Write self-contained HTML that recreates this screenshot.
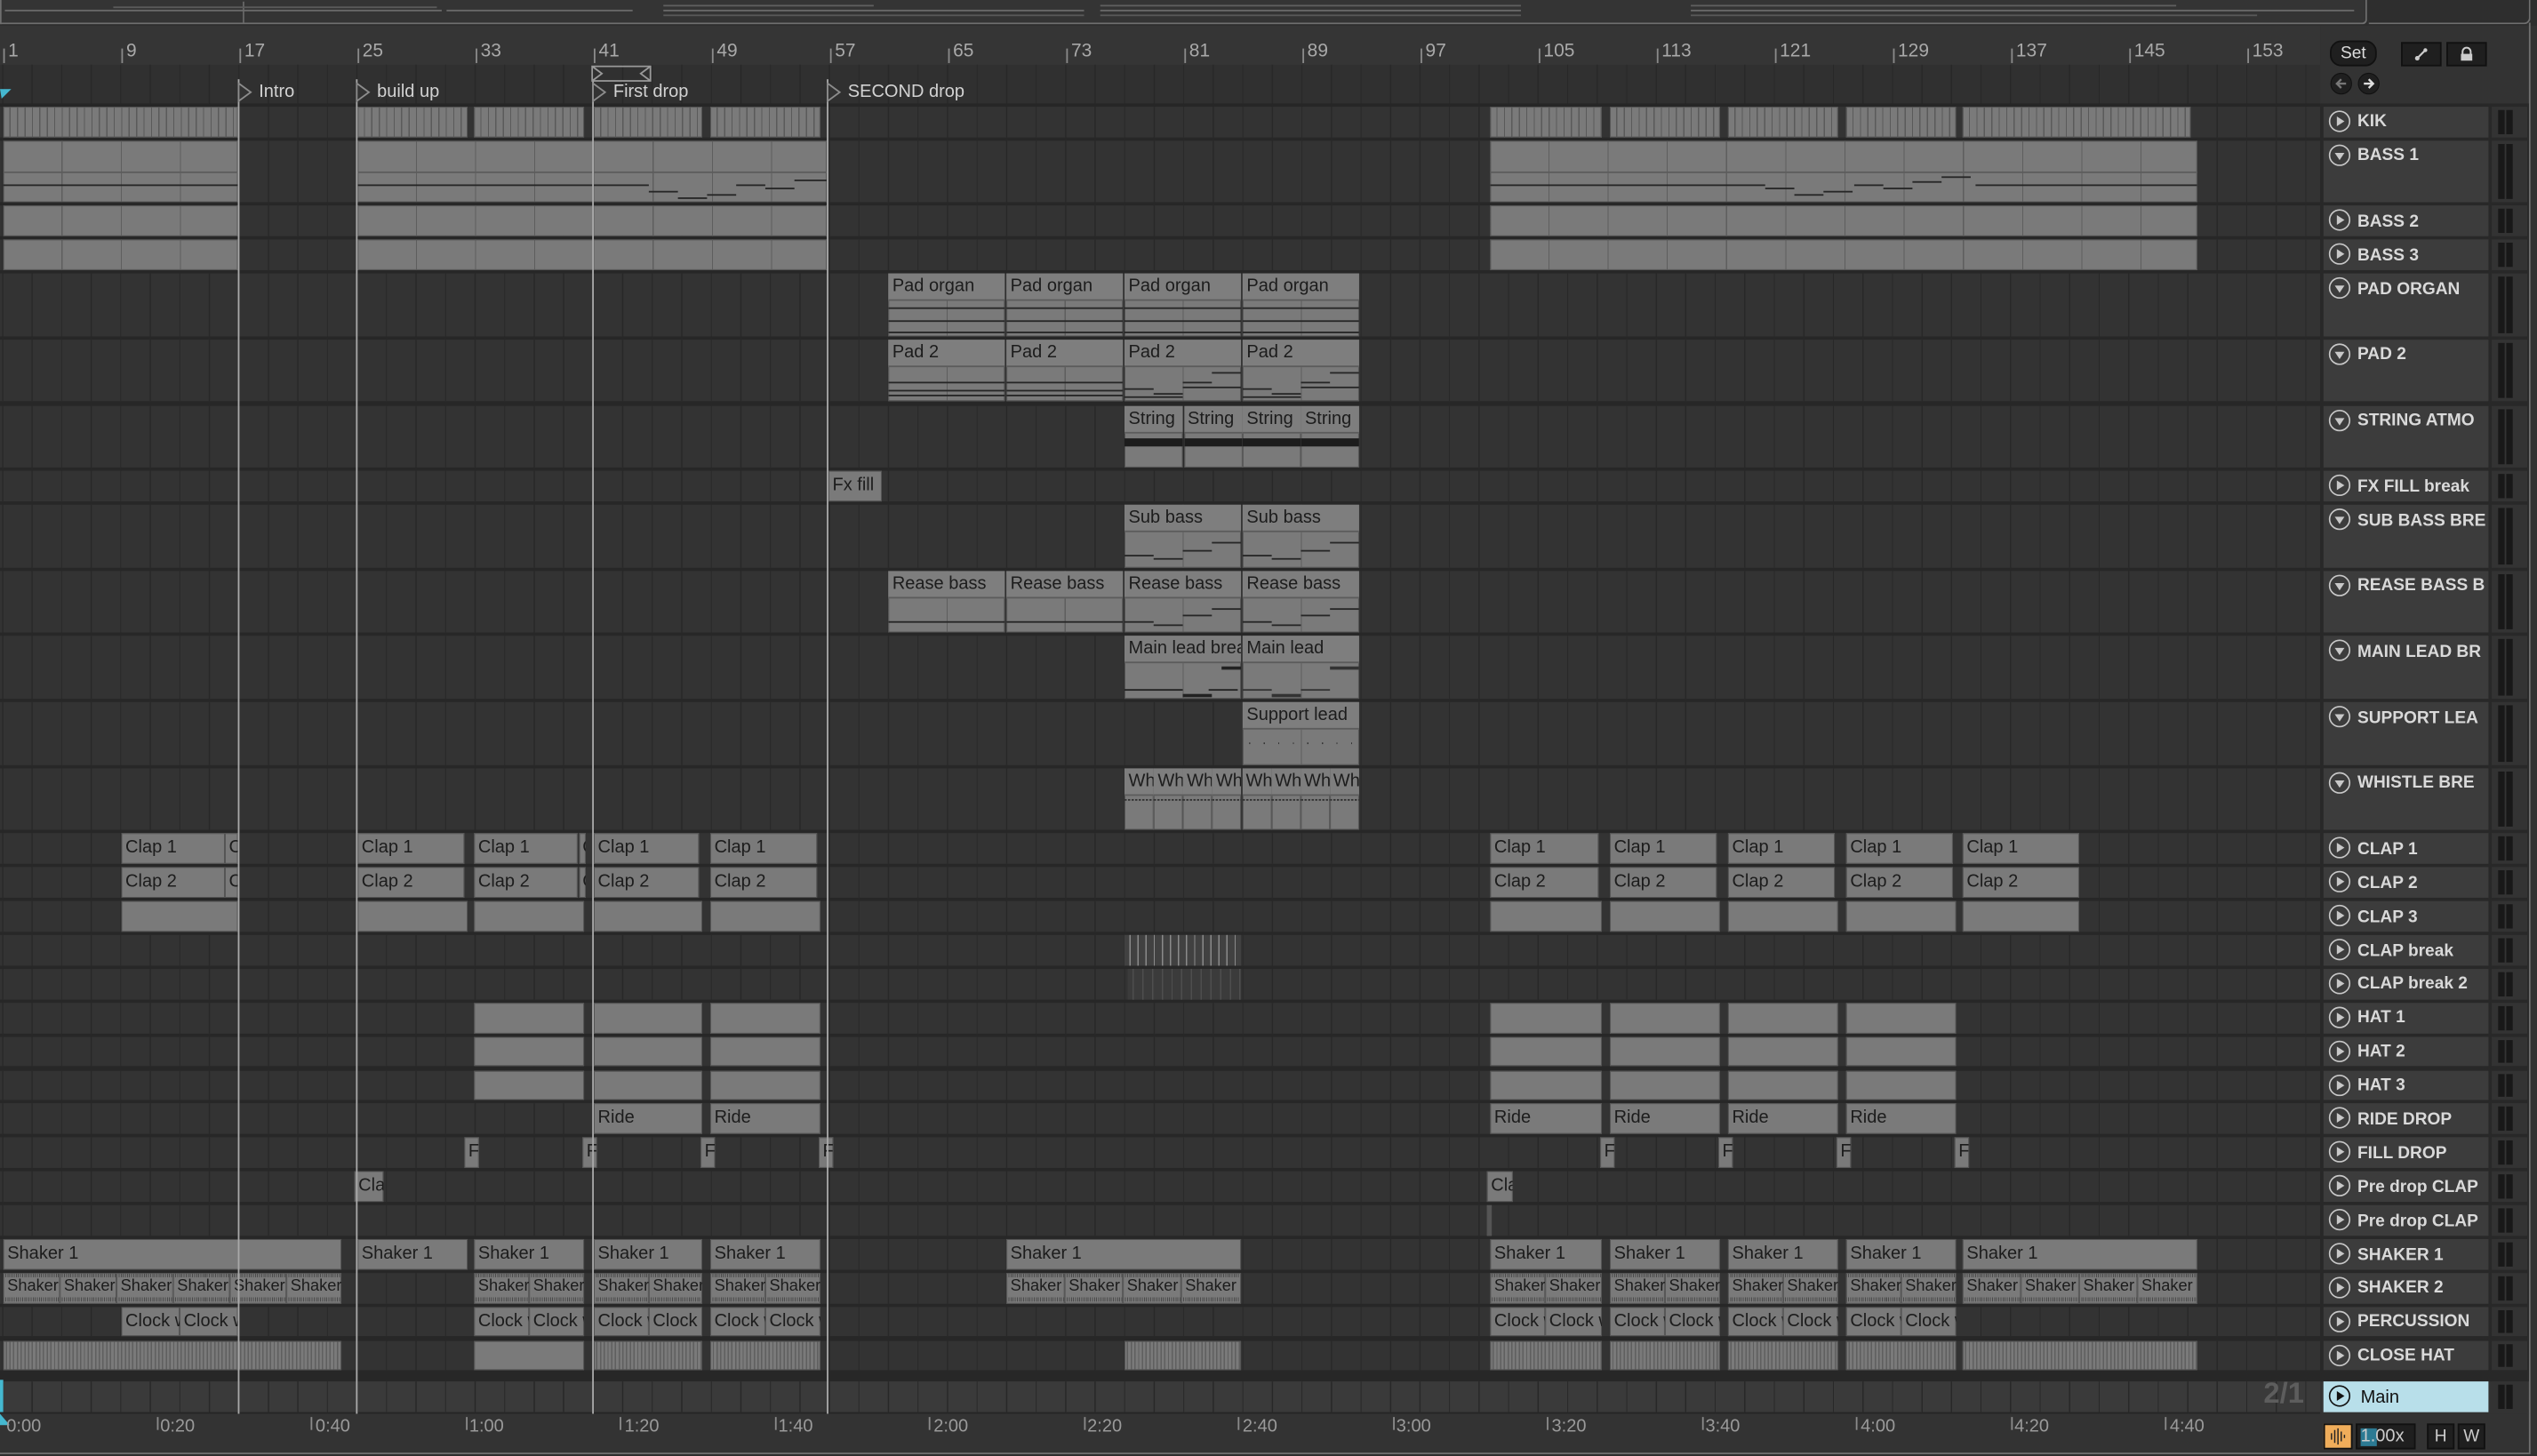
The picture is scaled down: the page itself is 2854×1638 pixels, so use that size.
<!DOCTYPE html>
<html><head><meta charset="utf-8">
<style>
html,body{margin:0;padding:0;width:2854px;height:1636px;overflow:hidden;background:#2e2e2e}
#s{position:absolute;left:0;top:0;width:1568px;height:899px;transform:scale(1.82015,1.8198);transform-origin:0 0;font-family:"Liberation Sans",sans-serif;background:#333}
.ab{position:absolute}
.grid{background-color:#333;background-image:repeating-linear-gradient(90deg,#282828 0 .7px,transparent .7px 18.25px);background-position:1.3px 0}
.r{position:absolute;left:0;width:1434px;height:18.7px}
.R{position:absolute;left:0;width:1434px;height:38.5px}
.c{position:absolute;top:0;height:100%;background:#7a7a7a;box-shadow:inset 0 0 0 .55px #555;overflow:hidden;font-size:11px;color:#1c1c1c;white-space:nowrap;padding-left:2.5px;box-sizing:border-box;line-height:18.7px}
.h{position:absolute;left:0;top:0;right:0;height:16px;line-height:16px;padding-left:2.5px;background:#7e7e7e;border-bottom:.6px solid #5c5c5c;font-size:11px}
.k{background-image:repeating-linear-gradient(90deg,transparent 0 3.9px,#5a5a5a 3.9px 4.6px)}
.ch{background-image:repeating-linear-gradient(90deg,transparent 0 1.5px,#5f5f5f 1.5px 2.3px)}
.d4{background-image:repeating-linear-gradient(90deg,transparent 0 36px,#5e5e5e 36px 36.6px)}
.cb{background:#414141;background-image:repeating-linear-gradient(90deg,transparent 0 3px,#8a8a8a 3px 3.8px,transparent 3.8px 5px);box-shadow:none}
.cb2{background:#3b3b3b;background-image:repeating-linear-gradient(90deg,transparent 0 3px,#4e4e4e 3px 3.8px,transparent 3.8px 6px);box-shadow:none}
.s2{font-size:10px;background-image:repeating-linear-gradient(90deg,#4a4a4a 0 .55px,transparent .55px 1.3px),repeating-linear-gradient(90deg,#4a4a4a 0 .55px,transparent .55px 1.3px);background-size:100% 2.6px,100% 2.6px;background-position:0 .6px,0 15.5px;background-repeat:repeat-x}
.ln{position:absolute;height:1px;background:#262626}
.loc{position:absolute;top:49px;width:.8px;height:825px;background:#a9a9a9;z-index:5}
.th{position:absolute;left:1436px;width:102.3px;background:#3c3c3c}
.th span{position:absolute;left:21px;top:3.5px;font-size:10.5px;font-weight:bold;color:#d9d9d9;white-space:nowrap}
.th svg{position:absolute;left:3px;top:2px}
.mt{position:absolute;left:1540px;width:22px;background:#333}
.mt i{position:absolute;top:2px;bottom:2px;width:3.6px;background:#181818}
.rn{position:absolute;top:26px;font-size:11.5px;color:#a9a9a9}
.tk{position:absolute;width:.7px;background:#8a8a8a}
.tm{position:absolute;top:876px;font-size:11px;color:#9a9a9a}
.mk{position:absolute;top:51px;font-size:11px;color:#d2d2d2}
</style></head><body>
<div id="s">
<!-- top overview -->
<div class="ab" style="left:0;top:0;width:1568px;height:15.5px;background:#2e2e2e"></div>
<div class="ab" style="left:0;top:0;width:1461px;height:14px;border:1px solid #6f6f6f;border-top:none;border-radius:0 0 3px 0;background:#343434"></div>
<div class="ab" style="left:150px;top:1px;width:1px;height:13px;background:#666"></div>
<div class="ab" style="left:3px;top:6px;width:270px;height:1px;background:#6a6a6a"></div>
<div class="ab" style="left:70px;top:3.5px;width:200px;height:1px;background:#5a5a5a"></div>
<div class="ab" style="left:276px;top:6px;width:115px;height:1px;background:#6a6a6a"></div>
<div class="ab" style="left:410px;top:3px;width:130px;height:1px;background:#5f5f5f"></div>
<div class="ab" style="left:410px;top:6px;width:260px;height:1px;background:#6a6a6a"></div>
<div class="ab" style="left:410px;top:9px;width:260px;height:1px;background:#585858"></div>
<div class="ab" style="left:680px;top:3px;width:260px;height:1px;background:#5f5f5f"></div>
<div class="ab" style="left:680px;top:6px;width:260px;height:1px;background:#6a6a6a"></div>
<div class="ab" style="left:680px;top:9px;width:260px;height:1px;background:#585858"></div>
<div class="ab" style="left:1045px;top:3px;width:300px;height:1px;background:#5f5f5f"></div>
<div class="ab" style="left:1045px;top:6px;width:410px;height:1px;background:#6a6a6a"></div>
<div class="ab" style="left:1045px;top:9px;width:350px;height:1px;background:#585858"></div>
<div class="ab" style="left:1464px;top:0;width:99px;height:14px;border:1px solid #6f6f6f;border-top:none;border-left:none;border-radius:0 0 4px 0"></div>
<div class="ab" style="left:1562.5px;top:14px;width:1.3px;height:885px;background:#6f6f6f"></div>

<!-- ruler -->
<div class="ab" style="left:0;top:15.5px;width:1434px;height:24px;background:#353535"></div>
<div class="tk" style="left:1.6px;top:30px;height:9px"></div><div class="rn" style="left:5px">1</div>
<div class="tk" style="left:74.6px;top:30px;height:9px"></div><div class="rn" style="left:78px">9</div>
<div class="tk" style="left:147.6px;top:30px;height:9px"></div><div class="rn" style="left:151px">17</div>
<div class="tk" style="left:220.6px;top:30px;height:9px"></div><div class="rn" style="left:224px">25</div>
<div class="tk" style="left:293.6px;top:30px;height:9px"></div><div class="rn" style="left:297px">33</div>
<div class="tk" style="left:366.6px;top:30px;height:9px"></div><div class="rn" style="left:370px">41</div>
<div class="tk" style="left:439.6px;top:30px;height:9px"></div><div class="rn" style="left:443px">49</div>
<div class="tk" style="left:512.6px;top:30px;height:9px"></div><div class="rn" style="left:516px">57</div>
<div class="tk" style="left:585.6px;top:30px;height:9px"></div><div class="rn" style="left:589px">65</div>
<div class="tk" style="left:658.6px;top:30px;height:9px"></div><div class="rn" style="left:662px">73</div>
<div class="tk" style="left:731.6px;top:30px;height:9px"></div><div class="rn" style="left:735px">81</div>
<div class="tk" style="left:804.6px;top:30px;height:9px"></div><div class="rn" style="left:808px">89</div>
<div class="tk" style="left:877.6px;top:30px;height:9px"></div><div class="rn" style="left:881px">97</div>
<div class="tk" style="left:950.6px;top:30px;height:9px"></div><div class="rn" style="left:954px">105</div>
<div class="tk" style="left:1023.6px;top:30px;height:9px"></div><div class="rn" style="left:1027px">113</div>
<div class="tk" style="left:1096.6px;top:30px;height:9px"></div><div class="rn" style="left:1100px">121</div>
<div class="tk" style="left:1169.6px;top:30px;height:9px"></div><div class="rn" style="left:1173px">129</div>
<div class="tk" style="left:1242.6px;top:30px;height:9px"></div><div class="rn" style="left:1246px">137</div>
<div class="tk" style="left:1315.6px;top:30px;height:9px"></div><div class="rn" style="left:1319px">145</div>
<div class="tk" style="left:1388.6px;top:30px;height:9px"></div><div class="rn" style="left:1392px">153</div>

<!-- marker row -->
<div class="ab grid" style="left:0;top:39.5px;width:1434px;height:25px;background-color:#303030"></div>
<div class="ab" style="left:0;top:63.5px;width:1434px;height:2.4px;background:#262626"></div>
<svg class="ab" style="left:0;top:55px" width="8" height="8"><path d="M0 0H7L1 6Z" fill="#45b8d0"/></svg>
<svg class="ab" style="left:365px;top:40px;z-index:6" width="40" height="12"><path d="M1 1H37V10H1ZM1 1L7 5.5L1 10M37 1L31 5.5L37 10" fill="none" stroke="#9a9a9a" stroke-width="1"/></svg>
<svg class="ab" style="left:147px;top:51px;z-index:6" width="10" height="13"><path d="M.5 .5L8 6L.5 11.5Z" fill="#333" stroke="#8c8c8c"/></svg><div class="mk" style="left:160px">Intro</div>
<svg class="ab" style="left:220px;top:51px;z-index:6" width="10" height="13"><path d="M.5 .5L8 6L.5 11.5Z" fill="#333" stroke="#8c8c8c"/></svg><div class="mk" style="left:233px">build up</div>
<svg class="ab" style="left:366px;top:51px;z-index:6" width="10" height="13"><path d="M.5 .5L8 6L.5 11.5Z" fill="#333" stroke="#8c8c8c"/></svg><div class="mk" style="left:379px">First drop</div>
<svg class="ab" style="left:511px;top:51px;z-index:6" width="10" height="13"><path d="M.5 .5L8 6L.5 11.5Z" fill="#333" stroke="#8c8c8c"/></svg><div class="mk" style="left:524px">SECOND drop</div>

<!-- lanes bg -->
<div class="ab" style="left:0;top:65.5px;width:1434px;height:788px;background:#272727"></div>

<!-- KIK -->
<div class="r grid" style="top:65.94px">
<div class="c k" style="left:2px;width:145px"></div><div class="c k" style="left:221px;width:68px"></div><div class="c k" style="left:293px;width:68px"></div><div class="c k" style="left:367px;width:67px"></div><div class="c k" style="left:439px;width:68px"></div><div class="c k" style="left:921px;width:69px"></div><div class="c k" style="left:995px;width:68px"></div><div class="c k" style="left:1068px;width:68px"></div><div class="c k" style="left:1141px;width:68px"></div><div class="c k" style="left:1213px;width:141px"></div>
</div>
<!-- BASS1 -->
<div class="R grid" style="top:86.82px">
<div class="c d4" style="left:2px;width:145px"><div class="ln" style="left:0;right:0;top:18.7px;height:.7px;background:#5c5c5c"></div><div class="ln" style="left:0;right:0;top:27px;height:.9px"></div></div>
<div class="c d4" style="left:221px;width:290px"><div class="ln" style="left:0;right:0;top:18.7px;height:.7px;background:#5c5c5c"></div><div class="ln" style="left:0;width:180px;top:27px;height:.9px"></div><div class="ln" style="left:180px;width:18px;top:31px;height:.9px"></div><div class="ln" style="left:198px;width:18px;top:35px;height:.9px"></div><div class="ln" style="left:216px;width:18px;top:33px;height:.9px"></div><div class="ln" style="left:234px;width:18px;top:27px;height:.9px"></div><div class="ln" style="left:252px;width:18px;top:29px;height:.9px"></div><div class="ln" style="left:270px;width:20px;top:24px;height:.9px"></div></div>
<div class="c d4" style="left:921px;width:437px"><div class="ln" style="left:0;right:0;top:18.7px;height:.7px;background:#5c5c5c"></div><div class="ln" style="left:0;width:170px;top:27px;height:.9px"></div><div class="ln" style="left:170px;width:18px;top:29px;height:.9px"></div><div class="ln" style="left:188px;width:18px;top:33px;height:.9px"></div><div class="ln" style="left:206px;width:18px;top:31px;height:.9px"></div><div class="ln" style="left:225px;width:18px;top:27px;height:.9px"></div><div class="ln" style="left:243px;width:18px;top:29px;height:.9px"></div><div class="ln" style="left:261px;width:18px;top:25px;height:.9px"></div><div class="ln" style="left:279px;width:18px;top:22px;height:.9px"></div><div class="ln" style="left:300px;width:137px;top:27px;height:.9px"></div></div>
</div>
<!-- BASS2/3 -->
<div class="r grid" style="top:127.49px"><div class="c d4" style="left:2px;width:145px"></div><div class="c d4" style="left:221px;width:290px"></div><div class="c d4" style="left:921px;width:437px"></div></div>
<div class="r grid" style="top:148.37px"><div class="c d4" style="left:2px;width:145px"></div><div class="c d4" style="left:221px;width:290px"></div><div class="c d4" style="left:921px;width:437px"></div></div>
<!-- PAD ORGAN -->
<div class="R grid" style="top:169.25px">
<div class="c d4" style="left:549px;width:72px"><div class="h">Pad organ</div><div class="ln" style="left:0;right:0;top:20.5px;height:1.2px"></div><div class="ln" style="left:0;right:0;top:28.5px;height:1.4px"></div><div class="ln" style="left:0;right:0;top:35.5px;height:1.2px"></div></div>
<div class="c d4" style="left:622px;width:72px"><div class="h">Pad organ</div><div class="ln" style="left:0;right:0;top:20.5px;height:1.2px"></div><div class="ln" style="left:0;right:0;top:28.5px;height:1.4px"></div><div class="ln" style="left:0;right:0;top:35.5px;height:1.2px"></div></div>
<div class="c d4" style="left:695px;width:72px"><div class="h">Pad organ</div><div class="ln" style="left:0;right:0;top:20.5px;height:1.2px"></div><div class="ln" style="left:0;right:0;top:28.5px;height:1.4px"></div><div class="ln" style="left:0;right:0;top:35.5px;height:1.2px"></div></div>
<div class="c d4" style="left:768px;width:72px"><div class="h">Pad organ</div><div class="ln" style="left:0;right:0;top:20.5px;height:1.2px"></div><div class="ln" style="left:0;right:0;top:28.5px;height:1.4px"></div><div class="ln" style="left:0;right:0;top:35.5px;height:1.2px"></div></div>
</div>
<!-- PAD 2 -->
<div class="R grid" style="top:209.91px">
<div class="c d4" style="left:549px;width:72px"><div class="h">Pad 2</div><div class="ln" style="left:0;right:0;top:26.5px;height:.8px"></div><div class="ln" style="left:0;right:0;top:31px;height:.8px"></div><div class="ln" style="left:0;right:0;top:34.5px;height:.8px"></div></div>
<div class="c d4" style="left:622px;width:72px"><div class="h">Pad 2</div><div class="ln" style="left:0;right:0;top:26.5px;height:.8px"></div><div class="ln" style="left:0;right:0;top:31px;height:.8px"></div><div class="ln" style="left:0;right:0;top:34.5px;height:.8px"></div></div>
<div class="c d4" style="left:695px;width:72px"><div class="h">Pad 2</div><div class="ln" style="left:0;width:18px;top:30px;height:.8px"></div><div class="ln" style="left:18px;width:18px;top:33px;height:.8px"></div><div class="ln" style="left:36px;width:18px;top:26px;height:.8px"></div><div class="ln" style="left:54px;width:18px;top:20px;height:.8px"></div><div class="ln" style="left:0;width:36px;top:35px;height:.8px"></div><div class="ln" style="left:36px;width:36px;top:29px;height:.8px"></div></div>
<div class="c d4" style="left:768px;width:72px"><div class="h">Pad 2</div><div class="ln" style="left:0;width:18px;top:30px;height:.8px"></div><div class="ln" style="left:18px;width:18px;top:33px;height:.8px"></div><div class="ln" style="left:36px;width:18px;top:26px;height:.8px"></div><div class="ln" style="left:54px;width:18px;top:20px;height:.8px"></div><div class="ln" style="left:0;width:36px;top:35px;height:.8px"></div><div class="ln" style="left:36px;width:36px;top:29px;height:.8px"></div></div>
</div>
<!-- STRING -->
<div class="R grid" style="top:250.58px">
<div class="c" style="left:695px;width:36px"><div class="h">String</div><div class="ln" style="left:0;right:0;top:20px;height:5px;background:#1c1c1c"></div></div>
<div class="c" style="left:731.5px;width:36px"><div class="h">String</div><div class="ln" style="left:0;right:0;top:20px;height:5px;background:#1c1c1c"></div></div>
<div class="c" style="left:768px;width:36px"><div class="h">String</div><div class="ln" style="left:0;right:0;top:20px;height:5px;background:#1c1c1c"></div></div>
<div class="c" style="left:804px;width:36px"><div class="h">String</div><div class="ln" style="left:0;right:0;top:20px;height:5px;background:#1c1c1c"></div></div>
</div>
<!-- FX -->
<div class="r grid" style="top:291.24px"><div class="c" style="left:512px;width:33px">Fx fill</div></div>
<!-- SUB -->
<div class="R grid" style="top:312.12px">
<div class="c d4" style="left:695px;width:72px"><div class="h">Sub bass</div><div class="ln" style="left:0;width:18px;top:30.8px;height:.8px"></div><div class="ln" style="left:18px;width:18px;top:33.3px;height:.8px"></div><div class="ln" style="left:36px;width:18px;top:27.5px;height:.8px"></div><div class="ln" style="left:54px;width:18px;top:23px;height:.8px"></div></div>
<div class="c d4" style="left:768px;width:72px"><div class="h">Sub bass</div><div class="ln" style="left:0;width:18px;top:30.8px;height:.8px"></div><div class="ln" style="left:18px;width:18px;top:33.3px;height:.8px"></div><div class="ln" style="left:36px;width:18px;top:27.5px;height:.8px"></div><div class="ln" style="left:54px;width:18px;top:23px;height:.8px"></div></div>
</div>
<!-- REASE -->
<div class="R grid" style="top:352.79px">
<div class="c d4" style="left:549px;width:72px"><div class="h">Rease bass</div><div class="ln" style="left:0;right:0;top:30.8px;height:.8px"></div></div>
<div class="c d4" style="left:622px;width:72px"><div class="h">Rease bass</div><div class="ln" style="left:0;right:0;top:30.8px;height:.8px"></div></div>
<div class="c d4" style="left:695px;width:72px"><div class="h">Rease bass</div><div class="ln" style="left:0;width:18px;top:30.8px;height:.8px"></div><div class="ln" style="left:18px;width:18px;top:33.3px;height:.8px"></div><div class="ln" style="left:36px;width:18px;top:27.5px;height:.8px"></div><div class="ln" style="left:54px;width:18px;top:23px;height:.8px"></div></div>
<div class="c d4" style="left:768px;width:72px"><div class="h">Rease bass</div><div class="ln" style="left:0;width:18px;top:30.8px;height:.8px"></div><div class="ln" style="left:18px;width:18px;top:33.3px;height:.8px"></div><div class="ln" style="left:36px;width:18px;top:27.5px;height:.8px"></div><div class="ln" style="left:54px;width:18px;top:23px;height:.8px"></div></div>
</div>
<!-- MAIN LEAD -->
<div class="R grid" style="top:393.45px">
<div class="c d4" style="left:695px;width:72px"><div class="h">Main lead break</div><div class="ln" style="left:0;width:36px;top:32.2px;height:1.6px;background:#222"></div><div class="ln" style="left:36px;width:18px;top:35.5px;height:1.6px;background:#222"></div><div class="ln" style="left:52px;width:18px;top:32.2px;height:1.6px;background:#222"></div><div class="ln" style="left:60px;width:12px;top:19px;height:1.6px;background:#222"></div></div>
<div class="c d4" style="left:768px;width:72px"><div class="h">Main lead</div><div class="ln" style="left:0;width:18px;top:32.2px;height:1.6px;background:#333"></div><div class="ln" style="left:18px;width:18px;top:35.5px;height:1.6px;background:#333"></div><div class="ln" style="left:36px;width:18px;top:32.2px;height:1.6px;background:#333"></div><div class="ln" style="left:54px;width:18px;top:19px;height:1.6px;background:#333"></div></div>
</div>
<!-- SUPPORT -->
<div class="R grid" style="top:434.11px"><div class="c d4" style="left:768px;width:72px"><div class="h">Support lead</div><div class="ln" style="left:4px;width:66px;top:25px;height:.7px;background:repeating-linear-gradient(90deg,#333 0 .7px,transparent .7px 9px)"></div></div></div>
<!-- WHISTLE -->
<div class="R grid" style="top:474.78px">
<div class="c" style="left:695px;width:18px"><div class="h">Wh</div><div class="ln" style="left:0;right:0;top:19.5px;height:.7px;background:repeating-linear-gradient(90deg,#333 0 1.4px,transparent 1.4px 2.2px)"></div></div>
<div class="c" style="left:713px;width:18px"><div class="h">Wh</div><div class="ln" style="left:0;right:0;top:19.5px;height:.7px;background:repeating-linear-gradient(90deg,#333 0 1.4px,transparent 1.4px 2.2px)"></div></div>
<div class="c" style="left:731px;width:18px"><div class="h">Wh</div><div class="ln" style="left:0;right:0;top:19.5px;height:.7px;background:repeating-linear-gradient(90deg,#333 0 1.4px,transparent 1.4px 2.2px)"></div></div>
<div class="c" style="left:749px;width:18px"><div class="h">Wh</div><div class="ln" style="left:0;right:0;top:19.5px;height:.7px;background:repeating-linear-gradient(90deg,#333 0 1.4px,transparent 1.4px 2.2px)"></div></div>
<div class="c" style="left:767.5px;width:18px"><div class="h">Wh</div><div class="ln" style="left:0;right:0;top:19.5px;height:.7px;background:repeating-linear-gradient(90deg,#333 0 1.4px,transparent 1.4px 2.2px)"></div></div>
<div class="c" style="left:785.5px;width:18px"><div class="h">Wh</div><div class="ln" style="left:0;right:0;top:19.5px;height:.7px;background:repeating-linear-gradient(90deg,#333 0 1.4px,transparent 1.4px 2.2px)"></div></div>
<div class="c" style="left:803.5px;width:18px"><div class="h">Wh</div><div class="ln" style="left:0;right:0;top:19.5px;height:.7px;background:repeating-linear-gradient(90deg,#333 0 1.4px,transparent 1.4px 2.2px)"></div></div>
<div class="c" style="left:821.5px;width:18.5px"><div class="h">Wh</div><div class="ln" style="left:0;right:0;top:19.5px;height:.7px;background:repeating-linear-gradient(90deg,#333 0 1.4px,transparent 1.4px 2.2px)"></div></div>
</div>
<!-- CLAP1 -->
<div class="r grid" style="top:515.44px">
<div class="c" style="left:75px;width:64px">Clap 1</div><div class="c" style="left:139px;width:8px">C</div><div class="c" style="left:221px;width:66px">Clap 1</div><div class="c" style="left:293px;width:64px">Clap 1</div><div class="c" style="left:357.5px;width:4px">C</div><div class="c" style="left:367px;width:65px">Clap 1</div><div class="c" style="left:439px;width:66px">Clap 1</div><div class="c" style="left:921px;width:67px">Clap 1</div><div class="c" style="left:995px;width:66px">Clap 1</div><div class="c" style="left:1068px;width:66px">Clap 1</div><div class="c" style="left:1141px;width:66px">Clap 1</div><div class="c" style="left:1213px;width:72px">Clap 1</div>
</div>
<div class="r grid" style="top:536.32px">
<div class="c" style="left:75px;width:64px">Clap 2</div><div class="c" style="left:139px;width:8px">C</div><div class="c" style="left:221px;width:66px">Clap 2</div><div class="c" style="left:293px;width:64px">Clap 2</div><div class="c" style="left:357.5px;width:4px">C</div><div class="c" style="left:367px;width:65px">Clap 2</div><div class="c" style="left:439px;width:66px">Clap 2</div><div class="c" style="left:921px;width:67px">Clap 2</div><div class="c" style="left:995px;width:66px">Clap 2</div><div class="c" style="left:1068px;width:66px">Clap 2</div><div class="c" style="left:1141px;width:66px">Clap 2</div><div class="c" style="left:1213px;width:72px">Clap 2</div>
</div>
<div class="r grid" style="top:557.2px">
<div class="c" style="left:75px;width:72px"></div><div class="c" style="left:221px;width:68px"></div><div class="c" style="left:293px;width:68px"></div><div class="c" style="left:367px;width:67px"></div><div class="c" style="left:439px;width:68px"></div><div class="c" style="left:921px;width:69px"></div><div class="c" style="left:995px;width:68px"></div><div class="c" style="left:1068px;width:68px"></div><div class="c" style="left:1141px;width:68px"></div><div class="c" style="left:1213px;width:72px"></div>
</div>
<!-- CLAP break -->
<div class="r grid" style="top:578.09px"><div class="c cb" style="left:695px;width:72px"></div></div>
<div class="r grid" style="top:598.97px"><div class="c cb2" style="left:697px;width:70px"></div></div>
<!-- HATS -->
<div class="r grid" style="top:619.85px"><div class="c" style="left:293px;width:68px"></div><div class="c" style="left:367px;width:67px"></div><div class="c" style="left:439px;width:68px"></div><div class="c" style="left:921px;width:69px"></div><div class="c" style="left:995px;width:68px"></div><div class="c" style="left:1068px;width:68px"></div><div class="c" style="left:1141px;width:68px"></div></div>
<div class="r grid" style="top:640.73px"><div class="c" style="left:293px;width:68px"></div><div class="c" style="left:367px;width:67px"></div><div class="c" style="left:439px;width:68px"></div><div class="c" style="left:921px;width:69px"></div><div class="c" style="left:995px;width:68px"></div><div class="c" style="left:1068px;width:68px"></div><div class="c" style="left:1141px;width:68px"></div></div>
<div class="r grid" style="top:661.61px"><div class="c" style="left:293px;width:68px"></div><div class="c" style="left:367px;width:67px"></div><div class="c" style="left:439px;width:68px"></div><div class="c" style="left:921px;width:69px"></div><div class="c" style="left:995px;width:68px"></div><div class="c" style="left:1068px;width:68px"></div><div class="c" style="left:1141px;width:68px"></div></div>
<!-- RIDE -->
<div class="r grid" style="top:682.49px"><div class="c" style="left:367px;width:67px">Ride</div><div class="c" style="left:439px;width:68px">Ride</div><div class="c" style="left:921px;width:69px">Ride</div><div class="c" style="left:995px;width:68px">Ride</div><div class="c" style="left:1068px;width:68px">Ride</div><div class="c" style="left:1141px;width:68px">Ride</div></div>
<!-- FILL -->
<div class="r grid" style="top:703.37px"><div class="c" style="left:287px;width:9px">F</div><div class="c" style="left:360px;width:9px">F</div><div class="c" style="left:433px;width:9px">F</div><div class="c" style="left:506px;width:9px">F</div><div class="c" style="left:989px;width:9px">F</div><div class="c" style="left:1062px;width:9px">F</div><div class="c" style="left:1135px;width:9px">F</div><div class="c" style="left:1208px;width:9px">F</div></div>
<!-- Pre drop -->
<div class="r grid" style="top:724.25px"><div class="c" style="left:219px;width:18px">Cla</div><div class="c" style="left:919px;width:16px">Cla</div></div>
<div class="r grid" style="top:745.14px"><div class="c" style="left:919px;width:2px;background:#555"></div></div>
<!-- SHAKER1 -->
<div class="r grid" style="top:766.02px"><div class="c" style="left:2px;width:209px">Shaker 1</div><div class="c" style="left:221px;width:68px">Shaker 1</div><div class="c" style="left:293px;width:68px">Shaker 1</div><div class="c" style="left:367px;width:67px">Shaker 1</div><div class="c" style="left:439px;width:68px">Shaker 1</div><div class="c" style="left:622px;width:145px">Shaker 1</div><div class="c" style="left:921px;width:69px">Shaker 1</div><div class="c" style="left:995px;width:68px">Shaker 1</div><div class="c" style="left:1068px;width:68px">Shaker 1</div><div class="c" style="left:1141px;width:68px">Shaker 1</div><div class="c" style="left:1213px;width:145px">Shaker 1</div></div>
<!-- SHAKER2 -->
<div class="r grid" style="top:786.9px">
<div class="c s2" style="left:2px;width:35px">Shaker</div><div class="c s2" style="left:37px;width:35px">Shaker</div><div class="c s2" style="left:72px;width:35px">Shaker</div><div class="c s2" style="left:107px;width:35px">Shaker</div><div class="c s2" style="left:142px;width:35px">Shaker</div><div class="c s2" style="left:177px;width:34px">Shaker</div>
<div class="c s2" style="left:293px;width:34px">Shaker</div><div class="c s2" style="left:327px;width:34px">Shaker</div><div class="c s2" style="left:367px;width:34px">Shaker</div><div class="c s2" style="left:401px;width:33px">Shaker</div><div class="c s2" style="left:439px;width:34px">Shaker</div><div class="c s2" style="left:473px;width:34px">Shaker</div>
<div class="c s2" style="left:622px;width:36px">Shaker</div><div class="c s2" style="left:658px;width:36px">Shaker</div><div class="c s2" style="left:694px;width:36px">Shaker</div><div class="c s2" style="left:730px;width:37px">Shaker</div>
<div class="c s2" style="left:921px;width:34px">Shaker</div><div class="c s2" style="left:955px;width:35px">Shaker</div><div class="c s2" style="left:995px;width:34px">Shaker</div><div class="c s2" style="left:1029px;width:34px">Shaker</div><div class="c s2" style="left:1068px;width:34px">Shaker</div><div class="c s2" style="left:1102px;width:34px">Shaker</div><div class="c s2" style="left:1141px;width:34px">Shaker</div><div class="c s2" style="left:1175px;width:34px">Shaker</div><div class="c s2" style="left:1213px;width:36px">Shaker</div><div class="c s2" style="left:1249px;width:36px">Shaker</div><div class="c s2" style="left:1285px;width:36px">Shaker</div><div class="c s2" style="left:1321px;width:37px">Shaker</div>
</div>
<!-- PERC -->
<div class="r grid" style="top:807.78px">
<div class="c" style="left:75px;width:36px">Clock w</div><div class="c" style="left:111px;width:36px">Clock w</div><div class="c" style="left:293px;width:34px">Clock w</div><div class="c" style="left:327px;width:34px">Clock w</div><div class="c" style="left:367px;width:34px">Clock w</div><div class="c" style="left:401px;width:33px">Clock w</div><div class="c" style="left:439px;width:34px">Clock w</div><div class="c" style="left:473px;width:34px">Clock w</div><div class="c" style="left:921px;width:34px">Clock w</div><div class="c" style="left:955px;width:35px">Clock w</div><div class="c" style="left:995px;width:34px">Clock w</div><div class="c" style="left:1029px;width:34px">Clock w</div><div class="c" style="left:1068px;width:34px">Clock w</div><div class="c" style="left:1102px;width:34px">Clock w</div><div class="c" style="left:1141px;width:34px">Clock w</div><div class="c" style="left:1175px;width:34px">Clock w</div>
</div>
<!-- CLOSE HAT -->
<div class="r grid" style="top:828.66px"><div class="c ch" style="left:2px;width:209px"></div><div class="c" style="left:293px;width:68px"></div><div class="c ch" style="left:367px;width:67px"></div><div class="c ch" style="left:439px;width:68px"></div><div class="c ch" style="left:695px;width:72px"></div><div class="c ch" style="left:921px;width:69px"></div><div class="c ch" style="left:995px;width:68px"></div><div class="c ch" style="left:1068px;width:68px"></div><div class="c ch" style="left:1141px;width:68px"></div><div class="c ch" style="left:1213px;width:145px"></div></div>

<!-- main row -->
<div class="ab grid" style="left:0;top:854px;width:1434px;height:19px;background-color:#3a3a3a"></div>
<div class="ab" style="left:0;top:853px;width:2px;height:20px;background:#45b8d0"></div>
<div class="ab" style="left:1399px;top:851px;font-size:18px;font-weight:bold;color:#5d5d5d">2/1</div>

<!-- locators -->
<div class="loc" style="left:147px"></div><div class="loc" style="left:220px"></div><div class="loc" style="left:366px"></div><div class="loc" style="left:511px"></div>

<!-- bottom time ruler -->
<div class="ab" style="left:0;top:873.5px;width:1562px;height:25.5px;background:#333"></div>
<div class="ab" style="left:0;top:873px;width:1434px;height:1px;background:#262626"></div>
<svg class="ab" style="left:0;top:874px" width="8" height="8"><path d="M0 0V7L6 7Z" fill="#45b8d0"/></svg>
<div class="tm" style="left:4px">0:00</div><div class="tm" style="left:99px">0:20</div><div class="tm" style="left:195px">0:40</div><div class="tm" style="left:290px">1:00</div><div class="tm" style="left:386px">1:20</div><div class="tm" style="left:481px">1:40</div><div class="tm" style="left:577px">2:00</div><div class="tm" style="left:672px">2:20</div><div class="tm" style="left:768px">2:40</div><div class="tm" style="left:863px">3:00</div><div class="tm" style="left:959px">3:20</div><div class="tm" style="left:1054px">3:40</div><div class="tm" style="left:1150px">4:00</div><div class="tm" style="left:1245px">4:20</div><div class="tm" style="left:1341px">4:40</div>
<div class="tk" style="left:97px;top:876px;height:8px"></div><div class="tk" style="left:192px;top:876px;height:8px"></div><div class="tk" style="left:288px;top:876px;height:8px"></div><div class="tk" style="left:383px;top:876px;height:8px"></div><div class="tk" style="left:479px;top:876px;height:8px"></div><div class="tk" style="left:574px;top:876px;height:8px"></div><div class="tk" style="left:670px;top:876px;height:8px"></div><div class="tk" style="left:765px;top:876px;height:8px"></div><div class="tk" style="left:861px;top:876px;height:8px"></div><div class="tk" style="left:956px;top:876px;height:8px"></div><div class="tk" style="left:1052px;top:876px;height:8px"></div><div class="tk" style="left:1147px;top:876px;height:8px"></div><div class="tk" style="left:1243px;top:876px;height:8px"></div><div class="tk" style="left:1338px;top:876px;height:8px"></div>

<!-- right panel -->
<div class="ab" style="left:1434px;top:15.5px;width:128px;height:50px;background:#333"></div>
<div class="ab" style="left:1440px;top:24.5px;width:27px;height:14px;border-radius:7px;background:#1f1f1f;border:.6px solid #111;color:#ddd;font-size:10.5px;text-align:center;line-height:14px">Set</div>
<div class="ab" style="left:1484px;top:25.5px;width:23px;height:13px;background:#1f1f1f;border:.6px solid #111"><svg width="23" height="13"><path d="M9 9L14 4" stroke="#ccc" stroke-width="1.2"/><circle cx="9" cy="9" r="1.4" fill="#ccc"/><circle cx="14" cy="4" r="1.2" fill="#ccc"/></svg></div>
<div class="ab" style="left:1512px;top:25.5px;width:23px;height:13px;background:#1f1f1f;border:.6px solid #111"><svg width="23" height="13"><path d="M9 6.5V5A2.5 2.5 0 0 1 14 5V6.5" fill="none" stroke="#ccc" stroke-width="1.1"/><rect x="8" y="6.3" width="7" height="4.2" fill="#ccc"/></svg></div>
<svg class="ab" style="left:1439px;top:44px" width="36" height="16"><circle cx="8" cy="7.7" r="6.4" fill="#1f1f1f" stroke="#111" stroke-width=".6"/><path d="M11 7.7H5.5M8 5L5.3 7.7L8 10.4" stroke="#777" stroke-width="1.3" fill="none"/><circle cx="25" cy="7.7" r="6.4" fill="#1f1f1f" stroke="#111" stroke-width=".6"/><path d="M22 7.7H27.5M25 5L27.7 7.7L25 10.4" stroke="#ddd" stroke-width="1.3" fill="none"/></svg>
<div class="ab" style="left:1434px;top:63.5px;width:128.5px;height:790px;background:#282828"></div>

<div class="th" style="top:65.94px;height:18.7px"><svg width="14" height="14"><circle cx="7" cy="7" r="6.2" fill="none" stroke="#c8c8c8" stroke-width=".9"/><path d="M5.3 4V10L10 7Z" fill="#c8c8c8"/></svg><span>KIK</span></div>
<div class="th" style="top:86.82px;height:38.5px"><svg width="14" height="14"><circle cx="7" cy="7" r="6.2" fill="none" stroke="#c8c8c8" stroke-width=".9"/><path d="M4 5.5H10L7 10Z" fill="#c8c8c8"/></svg><span>BASS 1</span></div>
<div class="th" style="top:127.49px;height:18.7px"><svg width="14" height="14"><circle cx="7" cy="7" r="6.2" fill="none" stroke="#c8c8c8" stroke-width=".9"/><path d="M5.3 4V10L10 7Z" fill="#c8c8c8"/></svg><span>BASS 2</span></div>
<div class="th" style="top:148.37px;height:18.7px"><svg width="14" height="14"><circle cx="7" cy="7" r="6.2" fill="none" stroke="#c8c8c8" stroke-width=".9"/><path d="M5.3 4V10L10 7Z" fill="#c8c8c8"/></svg><span>BASS 3</span></div>
<div class="th" style="top:169.25px;height:38.5px"><svg width="14" height="14"><circle cx="7" cy="7" r="6.2" fill="none" stroke="#c8c8c8" stroke-width=".9"/><path d="M4 5.5H10L7 10Z" fill="#c8c8c8"/></svg><span>PAD ORGAN</span></div>
<div class="th" style="top:209.91px;height:38.5px"><svg width="14" height="14"><circle cx="7" cy="7" r="6.2" fill="none" stroke="#c8c8c8" stroke-width=".9"/><path d="M4 5.5H10L7 10Z" fill="#c8c8c8"/></svg><span>PAD 2</span></div>
<div class="th" style="top:250.58px;height:38.5px"><svg width="14" height="14"><circle cx="7" cy="7" r="6.2" fill="none" stroke="#c8c8c8" stroke-width=".9"/><path d="M4 5.5H10L7 10Z" fill="#c8c8c8"/></svg><span>STRING ATMO</span></div>
<div class="th" style="top:291.24px;height:18.7px"><svg width="14" height="14"><circle cx="7" cy="7" r="6.2" fill="none" stroke="#c8c8c8" stroke-width=".9"/><path d="M5.3 4V10L10 7Z" fill="#c8c8c8"/></svg><span>FX FILL break</span></div>
<div class="th" style="top:312.12px;height:38.5px"><svg width="14" height="14"><circle cx="7" cy="7" r="6.2" fill="none" stroke="#c8c8c8" stroke-width=".9"/><path d="M4 5.5H10L7 10Z" fill="#c8c8c8"/></svg><span>SUB BASS BRE</span></div>
<div class="th" style="top:352.79px;height:38.5px"><svg width="14" height="14"><circle cx="7" cy="7" r="6.2" fill="none" stroke="#c8c8c8" stroke-width=".9"/><path d="M4 5.5H10L7 10Z" fill="#c8c8c8"/></svg><span>REASE BASS B</span></div>
<div class="th" style="top:393.45px;height:38.5px"><svg width="14" height="14"><circle cx="7" cy="7" r="6.2" fill="none" stroke="#c8c8c8" stroke-width=".9"/><path d="M4 5.5H10L7 10Z" fill="#c8c8c8"/></svg><span>MAIN LEAD BR</span></div>
<div class="th" style="top:434.11px;height:38.5px"><svg width="14" height="14"><circle cx="7" cy="7" r="6.2" fill="none" stroke="#c8c8c8" stroke-width=".9"/><path d="M4 5.5H10L7 10Z" fill="#c8c8c8"/></svg><span>SUPPORT LEA</span></div>
<div class="th" style="top:474.78px;height:38.5px"><svg width="14" height="14"><circle cx="7" cy="7" r="6.2" fill="none" stroke="#c8c8c8" stroke-width=".9"/><path d="M4 5.5H10L7 10Z" fill="#c8c8c8"/></svg><span>WHISTLE BRE</span></div>
<div class="th" style="top:515.44px;height:18.7px"><svg width="14" height="14"><circle cx="7" cy="7" r="6.2" fill="none" stroke="#c8c8c8" stroke-width=".9"/><path d="M5.3 4V10L10 7Z" fill="#c8c8c8"/></svg><span>CLAP 1</span></div>
<div class="th" style="top:536.32px;height:18.7px"><svg width="14" height="14"><circle cx="7" cy="7" r="6.2" fill="none" stroke="#c8c8c8" stroke-width=".9"/><path d="M5.3 4V10L10 7Z" fill="#c8c8c8"/></svg><span>CLAP 2</span></div>
<div class="th" style="top:557.2px;height:18.7px"><svg width="14" height="14"><circle cx="7" cy="7" r="6.2" fill="none" stroke="#c8c8c8" stroke-width=".9"/><path d="M5.3 4V10L10 7Z" fill="#c8c8c8"/></svg><span>CLAP 3</span></div>
<div class="th" style="top:578.09px;height:18.7px"><svg width="14" height="14"><circle cx="7" cy="7" r="6.2" fill="none" stroke="#c8c8c8" stroke-width=".9"/><path d="M5.3 4V10L10 7Z" fill="#c8c8c8"/></svg><span>CLAP break</span></div>
<div class="th" style="top:598.97px;height:18.7px"><svg width="14" height="14"><circle cx="7" cy="7" r="6.2" fill="none" stroke="#c8c8c8" stroke-width=".9"/><path d="M5.3 4V10L10 7Z" fill="#c8c8c8"/></svg><span>CLAP break 2</span></div>
<div class="th" style="top:619.85px;height:18.7px"><svg width="14" height="14"><circle cx="7" cy="7" r="6.2" fill="none" stroke="#c8c8c8" stroke-width=".9"/><path d="M5.3 4V10L10 7Z" fill="#c8c8c8"/></svg><span>HAT 1</span></div>
<div class="th" style="top:640.73px;height:18.7px"><svg width="14" height="14"><circle cx="7" cy="7" r="6.2" fill="none" stroke="#c8c8c8" stroke-width=".9"/><path d="M5.3 4V10L10 7Z" fill="#c8c8c8"/></svg><span>HAT 2</span></div>
<div class="th" style="top:661.61px;height:18.7px"><svg width="14" height="14"><circle cx="7" cy="7" r="6.2" fill="none" stroke="#c8c8c8" stroke-width=".9"/><path d="M5.3 4V10L10 7Z" fill="#c8c8c8"/></svg><span>HAT 3</span></div>
<div class="th" style="top:682.49px;height:18.7px"><svg width="14" height="14"><circle cx="7" cy="7" r="6.2" fill="none" stroke="#c8c8c8" stroke-width=".9"/><path d="M5.3 4V10L10 7Z" fill="#c8c8c8"/></svg><span>RIDE DROP</span></div>
<div class="th" style="top:703.37px;height:18.7px"><svg width="14" height="14"><circle cx="7" cy="7" r="6.2" fill="none" stroke="#c8c8c8" stroke-width=".9"/><path d="M5.3 4V10L10 7Z" fill="#c8c8c8"/></svg><span>FILL DROP</span></div>
<div class="th" style="top:724.25px;height:18.7px"><svg width="14" height="14"><circle cx="7" cy="7" r="6.2" fill="none" stroke="#c8c8c8" stroke-width=".9"/><path d="M5.3 4V10L10 7Z" fill="#c8c8c8"/></svg><span>Pre drop CLAP</span></div>
<div class="th" style="top:745.14px;height:18.7px"><svg width="14" height="14"><circle cx="7" cy="7" r="6.2" fill="none" stroke="#c8c8c8" stroke-width=".9"/><path d="M5.3 4V10L10 7Z" fill="#c8c8c8"/></svg><span>Pre drop CLAP</span></div>
<div class="th" style="top:766.02px;height:18.7px"><svg width="14" height="14"><circle cx="7" cy="7" r="6.2" fill="none" stroke="#c8c8c8" stroke-width=".9"/><path d="M5.3 4V10L10 7Z" fill="#c8c8c8"/></svg><span>SHAKER 1</span></div>
<div class="th" style="top:786.9px;height:18.7px"><svg width="14" height="14"><circle cx="7" cy="7" r="6.2" fill="none" stroke="#c8c8c8" stroke-width=".9"/><path d="M5.3 4V10L10 7Z" fill="#c8c8c8"/></svg><span>SHAKER 2</span></div>
<div class="th" style="top:807.78px;height:18.7px"><svg width="14" height="14"><circle cx="7" cy="7" r="6.2" fill="none" stroke="#c8c8c8" stroke-width=".9"/><path d="M5.3 4V10L10 7Z" fill="#c8c8c8"/></svg><span>PERCUSSION</span></div>
<div class="th" style="top:828.66px;height:18.7px"><svg width="14" height="14"><circle cx="7" cy="7" r="6.2" fill="none" stroke="#c8c8c8" stroke-width=".9"/><path d="M5.3 4V10L10 7Z" fill="#c8c8c8"/></svg><span>CLOSE HAT</span></div>
<div class="th" style="top:854px;height:19px;background:#b8dfea"><svg width="14" height="14"><circle cx="7" cy="7" r="6.2" fill="none" stroke="#111" stroke-width=".9"/><path d="M5.3 4V10L10 7Z" fill="#111"/></svg><span style="color:#111;font-weight:normal;left:23px;top:3.5px;font-size:11px">Main</span></div>

<!-- meters -->
<div class="mt" style="top:65.94px;height:18.7px"><i style="left:4px"></i><i style="left:9px"></i></div>
<div class="mt" style="top:86.82px;height:38.5px"><i style="left:4px"></i><i style="left:9px"></i></div>
<div class="mt" style="top:127.49px;height:18.7px"><i style="left:4px"></i><i style="left:9px"></i></div>
<div class="mt" style="top:148.37px;height:18.7px"><i style="left:4px"></i><i style="left:9px"></i></div>
<div class="mt" style="top:169.25px;height:38.5px"><i style="left:4px"></i><i style="left:9px"></i></div>
<div class="mt" style="top:209.91px;height:38.5px"><i style="left:4px"></i><i style="left:9px"></i></div>
<div class="mt" style="top:250.58px;height:38.5px"><i style="left:4px"></i><i style="left:9px"></i></div>
<div class="mt" style="top:291.24px;height:18.7px"><i style="left:4px"></i><i style="left:9px"></i></div>
<div class="mt" style="top:312.12px;height:38.5px"><i style="left:4px"></i><i style="left:9px"></i></div>
<div class="mt" style="top:352.79px;height:38.5px"><i style="left:4px"></i><i style="left:9px"></i></div>
<div class="mt" style="top:393.45px;height:38.5px"><i style="left:4px"></i><i style="left:9px"></i></div>
<div class="mt" style="top:434.11px;height:38.5px"><i style="left:4px"></i><i style="left:9px"></i></div>
<div class="mt" style="top:474.78px;height:38.5px"><i style="left:4px"></i><i style="left:9px"></i></div>
<div class="mt" style="top:515.44px;height:18.7px"><i style="left:4px"></i><i style="left:9px"></i></div>
<div class="mt" style="top:536.32px;height:18.7px"><i style="left:4px"></i><i style="left:9px"></i></div>
<div class="mt" style="top:557.2px;height:18.7px"><i style="left:4px"></i><i style="left:9px"></i></div>
<div class="mt" style="top:578.09px;height:18.7px"><i style="left:4px"></i><i style="left:9px"></i></div>
<div class="mt" style="top:598.97px;height:18.7px"><i style="left:4px"></i><i style="left:9px"></i></div>
<div class="mt" style="top:619.85px;height:18.7px"><i style="left:4px"></i><i style="left:9px"></i></div>
<div class="mt" style="top:640.73px;height:18.7px"><i style="left:4px"></i><i style="left:9px"></i></div>
<div class="mt" style="top:661.61px;height:18.7px"><i style="left:4px"></i><i style="left:9px"></i></div>
<div class="mt" style="top:682.49px;height:18.7px"><i style="left:4px"></i><i style="left:9px"></i></div>
<div class="mt" style="top:703.37px;height:18.7px"><i style="left:4px"></i><i style="left:9px"></i></div>
<div class="mt" style="top:724.25px;height:18.7px"><i style="left:4px"></i><i style="left:9px"></i></div>
<div class="mt" style="top:745.14px;height:18.7px"><i style="left:4px"></i><i style="left:9px"></i></div>
<div class="mt" style="top:766.02px;height:18.7px"><i style="left:4px"></i><i style="left:9px"></i></div>
<div class="mt" style="top:786.9px;height:18.7px"><i style="left:4px"></i><i style="left:9px"></i></div>
<div class="mt" style="top:807.78px;height:18.7px"><i style="left:4px"></i><i style="left:9px"></i></div>
<div class="mt" style="top:828.66px;height:18.7px"><i style="left:4px"></i><i style="left:9px"></i></div>
<div class="mt" style="top:854px;height:19px"><i style="left:4px"></i><i style="left:9px"></i></div>

<!-- bottom right controls -->
<div class="ab" style="left:1436px;top:880px;width:16px;height:14px;background:#f0ad5a;border:.6px solid #111"><svg width="16" height="14"><path d="M4 5V9M6 3V11M8 2V12M10 4V10M12 6V8" stroke="#222" stroke-width=".8"/></svg></div>
<div class="ab" style="left:1456px;top:880px;width:35px;height:14px;background:#1f1f1f;border:.6px solid #111"><div class="ab" style="left:1.5px;top:1.5px;width:10px;height:11px;background:#2c7a93"></div><div class="ab" style="left:2px;top:0;font-size:11px;line-height:14px;color:#ccc">1.00x</div></div>
<div class="ab" style="left:1500px;top:880px;width:15px;height:14px;background:#1f1f1f;border:.6px solid #111;color:#ccc;font-size:10.5px;text-align:center;line-height:14px">H</div>
<div class="ab" style="left:1519px;top:880px;width:15px;height:14px;background:#1f1f1f;border:.6px solid #111;color:#ccc;font-size:10.5px;text-align:center;line-height:14px">W</div>
<div class="ab" style="left:0;top:897.5px;width:1563px;height:1.5px;background:#6f6f6f"></div>
</div>
</body></html>
